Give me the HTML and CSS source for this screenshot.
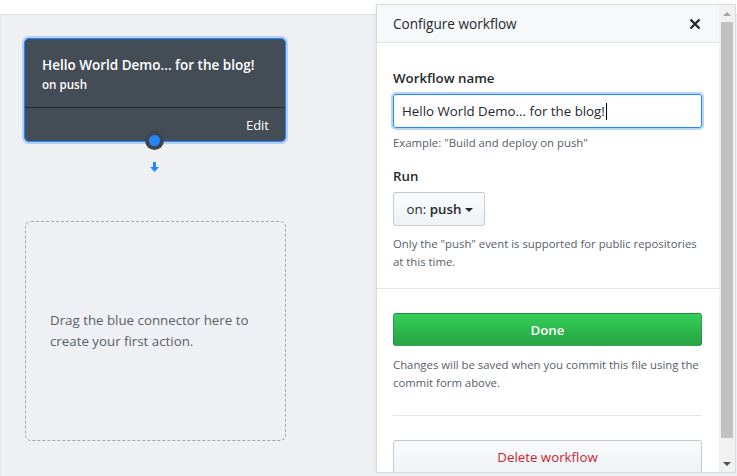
FILE: index.html
```html
<!DOCTYPE html>
<html lang="en">
<head>
<meta charset="utf-8">
<title>Configure workflow</title>
<link rel="stylesheet" href="styles.css">
</head>
<body>
<div class="topbar"></div>
<main class="canvas">
  <div class="workflow">
    <div class="card">
      <div class="card-head">
        <div class="card-title">Hello World Demo... for the blog!</div>
        <div class="card-sub">on push</div>
      </div>
      <div class="card-foot"><span class="card-edit">Edit</span></div>
      <span class="connector"><span class="connector-dot"></span></span>
    </div>
    <svg class="arrow" width="9" height="10" viewBox="0 0 9 10" aria-hidden="true"><path d="M3 0h3v5h3l-4.5 5L0 5h3z" fill="#2188ff"/></svg>
    <div class="dropzone">
      <p class="dropzone-text">Drag the blue connector here to create your first action.</p>
    </div>
  </div>
</main>
<aside class="panel">
  <div class="panel-main">
    <div class="panel-head">
      <span class="panel-title">Configure workflow</span>
      <svg class="close" width="12" height="12" viewBox="0 0 12 12" aria-hidden="true"><path d="M1.5 1.5l9 9M10.5 1.5l-9 9" stroke="#24292e" stroke-width="2.4" stroke-linecap="butt"/></svg>
    </div>
    <section class="panel-section">
      <div class="label">Workflow name</div>
      <div class="input">Hello World Demo... for the blog!<span class="caret"></span></div>
      <p class="note note-example">Example: "Build and deploy on push"</p>
      <div class="label label-run">Run</div>
      <button class="btn btn-select" type="button"><span class="btn-on">on:</span>&nbsp;<b>push</b><span class="dropdown-caret"></span></button>
      <p class="note note-run">Only the "push" event is supported for public repositories at this time.</p>
    </section>
    <section class="panel-section panel-section-actions">
      <button class="btn btn-primary" type="button">Done</button>
      <p class="note note-save">Changes will be saved when you commit this file using the commit form above.</p>
      <hr class="rule">
      <button class="btn btn-danger" type="button">Delete workflow</button>
    </section>
  </div>
  <div class="scrollbar">
    <span class="sb-arrow sb-up"></span>
    <span class="sb-thumb"></span>
    <span class="sb-arrow sb-down"></span>
  </div>
</aside>
</body>
</html>
```

FILE: styles.css
```css
* { box-sizing: border-box; }
html, body { margin: 0; height: 100%; }
body {
  font-family: "Open Sans", "Noto Sans", sans-serif;
  font-size: 13.3px;
  color: #24292e;
  background: #eff0f4;
  overflow: hidden;
  position: relative;
}
.topbar {
  height: 15px;
  background: #fff;
  border-bottom: 1px solid #e1e4e8;
}
.canvas {
  height: 461px;
  background: #eff0f4;
  border-left: 1px solid #e4e6ea;
  padding: 23px 0 0 23px;
}
.workflow {
  width: 262px;
  display: flex;
  flex-direction: column;
  align-items: center;
}
.card {
  position: relative;
  width: 262px;
  height: 104px;
  background: #444d56;
  border: 1px solid #2188ff;
  border-radius: 5px;
  box-shadow: 0 0 0 2px rgba(33, 136, 255, 0.3);
  color: #fff;
  display: flex;
  flex-direction: column;
}
.card-head {
  flex: 1;
  padding: 16px 16px 0 17px;
  border-bottom: 1px solid #24292e;
}
.card-title {
  font-weight: 600;
  font-size: 13.5px;
  line-height: 20px;
}
.card-sub {
  font-weight: 600;
  font-size: 11.6px;
  line-height: 18px;
  margin-top: 1px;
}
.card-foot {
  height: 33px;
  display: flex;
  align-items: center;
  justify-content: flex-end;
  padding-right: 16px;
  font-size: 13px;
}
.connector {
  position: absolute;
  left: 120px;
  bottom: -9px;
  width: 19px;
  height: 19px;
  border-radius: 50%;
  background: #3f464e;
  display: flex;
  align-items: center;
  justify-content: center;
}
.connector-dot {
  width: 11px;
  height: 11px;
  border-radius: 50%;
  background: #2188ff;
}
.arrow {
  display: block;
  margin-top: 20px;
  margin-left: -1px;
}
.dropzone {
  margin-top: 49px;
  margin-left: 1px;
  width: 261px;
  height: 220px;
  border: 1px dashed #a0a6ad;
  border-radius: 6px;
  display: flex;
  align-items: center;
  padding: 0 24px;
}
.dropzone-text {
  margin: 0 0 1px;
  font-size: 13.3px;
  line-height: 21px;
  color: #586069;
}

/* Panel (floating over the canvas) */
.panel {
  position: absolute;
  left: 376px;
  top: 4px;
  width: 360px;
  height: 469px;
  background: #fff;
  border: 1px solid #d8dce1;
  box-shadow: -1px 0 2px rgba(27, 31, 35, 0.06);
  display: flex;
  overflow: hidden;
}
.panel-main {
  width: 342px;
  overflow: hidden;
}
.panel-head {
  height: 38px;
  background: #f6f8fa;
  border-bottom: 1px solid #e1e4e8;
  display: flex;
  align-items: center;
  justify-content: space-between;
  padding: 0 18px 0 16px;
}
.panel-title {
  font-size: 13.6px;
  font-weight: 500;
  color: #24292e;
}
.close { display: block; }
.panel-section {
  padding: 25px 17px 17px 16px;
  border-bottom: 1px solid #e1e4e8;
}
.label {
  font-size: 13.3px;
  font-weight: 600;
  line-height: 20px;
}
.label-run { margin-top: 14px; }
.input {
  margin-top: 6px;
  height: 34px;
  border: 1px solid #2188ff;
  border-radius: 3px;
  box-shadow: 0 0 0 2px rgba(3, 102, 214, 0.28);
  padding: 0 8px;
  display: flex;
  align-items: center;
  font-size: 13.3px;
  color: #24292e;
}
.caret {
  display: inline-block;
  width: 1px;
  height: 17px;
  background: #000;
  margin-left: 1px;
}
.note {
  margin: 0;
  font-size: 11.35px;
  line-height: 18px;
  color: #586069;
}
.note-example { margin-top: 6px; }
.note-run { margin-top: 9px; }
.btn {
  display: flex;
  align-items: center;
  justify-content: center;
  height: 34px;
  border: 1px solid rgba(27, 31, 35, 0.2);
  border-radius: 3px;
  font-family: inherit;
  font-size: 13.3px;
  padding: 0 12px;
}
.btn-select {
  margin-top: 6px;
  width: 92px;
  background: linear-gradient(#fafbfc, #eff3f6 90%);
  color: #24292e;
  padding: 0 0 0 2px;
}
.btn-on { font-weight: 400; }
.btn-select b { font-weight: 600; }
.dropdown-caret {
  display: inline-block;
  margin-left: 4px;
  margin-top: 2px;
  border-top: 4px solid #24292e;
  border-left: 4px solid transparent;
  border-right: 4px solid transparent;
}
.panel-section-actions {
  border-bottom: 0;
  padding-top: 24px;
}
.btn-primary {
  width: 100%;
  height: 33px;
  background: linear-gradient(#34d058, #28a745 90%);
  color: #fff;
  font-weight: 600;
}
.note-save { margin-top: 10px; }
.rule {
  margin: 23px 0 0;
  border: 0;
  border-top: 1px solid #e1e4e8;
}
.btn-danger {
  margin-top: 24px;
  width: 100%;
  background: linear-gradient(#fafbfc, #eff3f6 90%);
  color: #cb2431;
  font-weight: 500;
}

/* Scrollbar drawing */
.scrollbar {
  width: 16px;
  background: #f1f1f1;
  display: flex;
  flex-direction: column;
  align-items: center;
}
.sb-arrow {
  height: 17px;
  width: 16px;
  display: flex;
  align-items: center;
  justify-content: center;
}
.sb-up::before, .sb-down::before {
  content: "";
  border-left: 4px solid transparent;
  border-right: 4px solid transparent;
}
.sb-up::before { border-bottom: 4px solid #a3a3a3; }
.sb-down::before { border-top: 4px solid #505050; }
.sb-thumb {
  width: 12px;
  height: 416px;
  background: #c1c1c1;
  margin: 0 1px 0 0;
}
.sb-down { margin-top: auto; }
```
